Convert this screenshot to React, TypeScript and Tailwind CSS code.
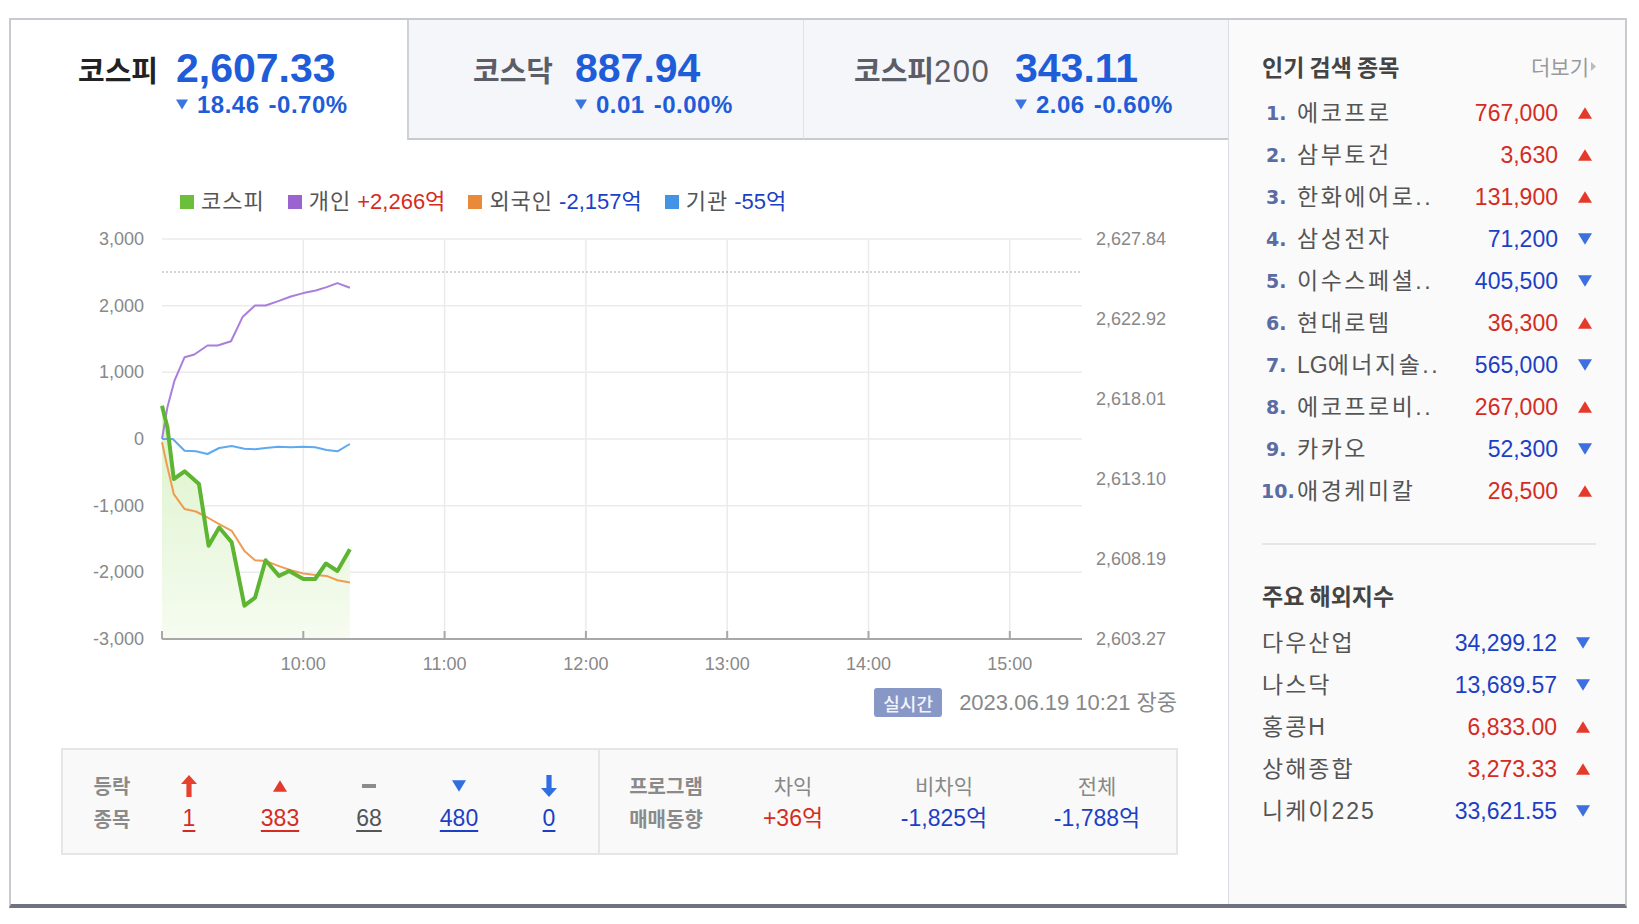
import React from "react";

const KO = "font-['Noto_Sans_CJK_KR','Liberation_Sans',sans-serif]";
const LAT = "font-['Liberation_Sans','Noto_Sans_CJK_KR',sans-serif]";
const RED = "text-[#d42c23]";
const BLUE = "text-[#1c3fc6]";

const TriDown = ({ c = "#3f74e0", w = 12, h = 10 }: { c?: string; w?: number; h?: number }) => (
  <svg width={w} height={h} viewBox="0 0 12 10" className="block shrink-0">
    <path d="M0 0H12L6 10Z" fill={c} />
  </svg>
);
const TriUp = ({ c = "#e53a2b", w = 13, h = 11 }: { c?: string; w?: number; h?: number }) => (
  <svg width={w} height={h} viewBox="0 0 12 10" className="block shrink-0">
    <path d="M6 0L12 10H0Z" fill={c} />
  </svg>
);

const X = (m: number) => 162 + m * 2.355;
const Y = (v: number) => 439 - v * 0.066667;
const toPath = (d: number[][]) =>
  d.map(([m, v], i) => `${i ? "L" : "M"}${X(m).toFixed(1)} ${Y(v).toFixed(1)}`).join(" ");

const green = [
  [0, 500], [2.3, 175], [5, -600], [9.6, -485], [15.7, -676], [19.8, -1600], [24.3, -1327],
  [29.6, -1550], [35, -2500], [39.5, -2380], [44, -1818], [49.7, -2053], [54, -1980],
  [60, -2100], [65, -2100], [69.6, -1868], [74.5, -1980], [79.8, -1653],
];
const purple = [
  [0, 0], [2.3, 475], [5.3, 876], [9.6, 1227], [13.7, 1267], [19.3, 1402], [23.6, 1402],
  [29.3, 1467], [34.2, 1828], [39.5, 2003], [44, 2003], [49.4, 2068], [54.7, 2138],
  [60, 2188], [65.3, 2228], [69.9, 2278], [74.5, 2338], [79.8, 2268],
];
const orange = [
  [0, -50], [2, -375], [5, -826], [9.6, -1051], [14.4, -1087], [19.3, -1177], [24.3, -1277],
  [29.6, -1377], [35, -1678], [39.5, -1818], [44, -1828], [49.4, -1903], [54.7, -1968],
  [60, -2018], [65.3, -2038], [69.9, -2053], [74.5, -2118], [79.8, -2153],
];
const blue = [
  [0, 0], [4.6, 0], [9.6, -175], [14.4, -185], [19.3, -225], [24.3, -135], [29.6, -105],
  [35, -145], [39.5, -155], [44, -135], [49.4, -115], [54.7, -125], [60, -115], [65, -125],
  [69.9, -165], [74.5, -185], [79.8, -75],
];

function Chart() {
  const hours = [10, 11, 12, 13, 14, 15];
  const leftLabels = ["3,000", "2,000", "1,000", "0", "-1,000", "-2,000", "-3,000"];
  const rightLabels = ["2,627.84", "2,622.92", "2,618.01", "2,613.10", "2,608.19", "2,603.27"];
  const gp = toPath(green);
  const fill = `${gp} L${X(79.8).toFixed(1)} 639 L162 639 Z`;
  const hx = (h: number) => 162 + (h - 9) * 141.3;
  const font = "'Liberation Sans', sans-serif";
  return (
    <svg width="1217" height="467" viewBox="11 213 1217 467" className="block">
      <defs>
        <linearGradient id="gf" x1="0" y1="380" x2="0" y2="639" gradientUnits="userSpaceOnUse">
          <stop offset="0" stopColor="#d9f1c5" />
          <stop offset="1" stopColor="#f6fcf1" />
        </linearGradient>
      </defs>
      {leftLabels.slice(0, 6).map((_, i) => (
        <line key={i} x1={162} x2={1082} y1={239 + i * 66.667} y2={239 + i * 66.667} stroke="#ebebeb" strokeWidth={1.5} />
      ))}
      {hours.map((h) => (
        <line key={h} x1={hx(h)} x2={hx(h)} y1={239} y2={639} stroke="#ebebeb" strokeWidth={1.5} />
      ))}
      <line x1={162} x2={1082} y1={272} y2={272} stroke="#a9a9a9" strokeWidth={1} strokeDasharray="2 2" />
      <path d={fill} fill="url(#gf)" />
      <line x1={162} x2={1082} y1={639} y2={639} stroke="#a8a8a8" strokeWidth={2} />
      {[162, ...hours.map(hx)].map((x, i) => (
        <line key={i} x1={x} x2={x} y1={631} y2={639} stroke="#a8a8a8" strokeWidth={2} />
      ))}
      <path d={toPath(purple)} fill="none" stroke="#a97fdd" strokeWidth={2} strokeLinejoin="round" />
      <path d={toPath(orange)} fill="none" stroke="#ef9c52" strokeWidth={2} strokeLinejoin="round" />
      <path d={toPath(blue)} fill="none" stroke="#5ea9f0" strokeWidth={2} strokeLinejoin="round" />
      <path d={gp} fill="none" stroke="#5db532" strokeWidth={4} strokeLinejoin="round" />
      {leftLabels.map((t, i) => (
        <text key={t} x={144} y={239 + i * 66.667} textAnchor="end" dominantBaseline="central" fontSize={18} fill="#888" fontFamily={font}>
          {t}
        </text>
      ))}
      {rightLabels.map((t, i) => (
        <text key={t} x={1096} y={239 + i * 80} dominantBaseline="central" fontSize={18} fill="#888" fontFamily={font}>
          {t}
        </text>
      ))}
      {hours.map((h) => (
        <text key={h} x={hx(h)} y={664} textAnchor="middle" dominantBaseline="central" fontSize={18} fill="#888" fontFamily={font}>
          {h}:00
        </text>
      ))}
    </svg>
  );
}

function IndexTab({
  label,
  labelW,
  value,
  diff,
  pct,
  className,
}: {
  label: React.ReactNode;
  labelW: string;
  value: string;
  diff: string;
  pct: string;
  className: string;
}) {
  return (
    <div className={className}>
      <div className="flex items-baseline gap-[16px]">
        <div className={`${labelW} whitespace-nowrap`}>{label}</div>
        <div className="flex flex-col">
          <div className={`${LAT} text-[41px] leading-[41px] font-bold text-[#1f5dd8] whitespace-nowrap`}>{value}</div>
          <div className={`${LAT} mt-[4px] h-[23px] flex items-center text-[24px] leading-none font-bold tracking-[0.5px] text-[#1f5dd8] whitespace-nowrap`}>
            <TriDown c="#3c74df" w={12} h={11} />
            <span className="ml-[9px]">{diff}</span>
            <span className="ml-[9px]">{pct}</span>
          </div>
        </div>
      </div>
    </div>
  );
}

function Legend() {
  const item = (color: string, label: string, val?: string, cls?: string) => (
    <div className="flex items-center">
      <span className="w-[14px] h-[14px]" style={{ background: color }} />
      <span className="ml-[7px] text-[#555] tracking-[1px]">{label}</span>
      {val && <span className={`ml-[6px] ${cls}`}>{val}</span>}
    </div>
  );
  return (
    <div className={`mt-[51px] h-[22px] pl-[169px] flex items-center gap-[23px] text-[22px] leading-none ${LAT}`}>
      {item("#6cbf3b", "코스피")}
      {item("#9b63cf", "개인", "+2,266억", RED)}
      {item("#e98a3a", "외국인", "-2,157억", BLUE)}
      {item("#4494e6", "기관", "-55억", BLUE)}
    </div>
  );
}

const ArrowUp = () => (
  <svg width="16" height="22" viewBox="0 0 16 22" className="block">
    <path d="M8 0L16 9H10.6V22H5.4V9H0Z" fill="#e4412f" />
  </svg>
);
const ArrowDown = () => (
  <svg width="16" height="22" viewBox="0 0 16 22" className="block">
    <path d="M8 22L16 13H10.6V0H5.4V13H0Z" fill="#2f6fe0" />
  </svg>
);

function Stats() {
  const cell = "h-[33px] flex items-center justify-center";
  const num = `${LAT} text-[23px] leading-none underline underline-offset-[4px] decoration-[1.5px]`;
  const col = (top: React.ReactNode, bottom: React.ReactNode) => (
    <div className="flex flex-col">
      <div className={cell}>{top}</div>
      <div className={cell}>{bottom}</div>
    </div>
  );
  const lbl = `${KO} text-[20px] leading-none font-bold text-[#8a8a8a]`;
  const head = `${KO} text-[21px] leading-none text-[#888]`;
  const val = `${LAT} text-[23px] leading-none`;
  return (
    <div className="mt-[31px] ml-[50px] w-[1117px] h-[107px] border-2 border-[#e6e6e6] bg-[#f9f9f9] flex">
      <div className="w-[537px] border-r-2 border-[#e6e6e6] pt-[19px] grid grid-cols-[98px_56px_126px_52px_128px_52px] content-start">
        {col(<span className={lbl}>등락</span>, <span className={lbl}>종목</span>)}
        {col(<ArrowUp />, <span className={`${num} ${RED}`}>1</span>)}
        {col(<TriUp w={14} h={12} />, <span className={`${num} ${RED}`}>383</span>)}
        {col(<span className="block w-[14px] h-[4px] bg-[#8c8c8c]" />, <span className={`${num} text-[#555]`}>68</span>)}
        {col(<TriDown c="#2f6fe0" w={14} h={12} />, <span className={`${num} ${BLUE}`}>480</span>)}
        {col(<ArrowDown />, <span className={`${num} ${BLUE}`}>0</span>)}
      </div>
      <div className="flex-1 pt-[19px] grid grid-cols-[132px_122px_180px_126px] content-start">
        {col(<span className={lbl}>프로그램</span>, <span className={lbl}>매매동향</span>)}
        {col(<span className={head}>차익</span>, <span className={`${val} ${RED}`}>+36억</span>)}
        {col(<span className={head}>비차익</span>, <span className={`${val} ${BLUE}`}>-1,825억</span>)}
        {col(<span className={head}>전체</span>, <span className={`${val} ${BLUE}`}>-1,788억</span>)}
      </div>
    </div>
  );
}

function LeftColumn() {
  return (
    <div className="w-[1217px] flex flex-col">
      <div className="flex h-[120px]">
        <IndexTab
          className="w-[396px] h-[120px] bg-white pl-[67px] pt-[28px]"
          label={<span className={`${KO} text-[29px] leading-none font-bold text-[#222]`}>코스피</span>}
          labelW="w-[82px]"
          value="2,607.33"
          diff="18.46"
          pct="-0.70%"
        />
        <IndexTab
          className="w-[396px] h-[120px] bg-[#f5f6f9] border-l-2 border-b-2 border-l-[#cfd1d6] border-b-[#c8cad0] pl-[64px] pt-[28px]"
          label={<span className={`${KO} text-[29px] leading-none font-bold text-[#5b5e66]`}>코스닥</span>}
          labelW="w-[86px]"
          value="887.94"
          diff="0.01"
          pct="-0.00%"
        />
        <IndexTab
          className="w-[425px] h-[120px] bg-[#f5f6f9] border-l border-b-2 border-l-[#dfe1e5] border-b-[#c8cad0] pl-[50px] pt-[28px]"
          label={
            <span className="leading-none text-[#5b5e66]">
              <span className={`${KO} text-[29px] font-bold`}>코스피</span>
              <span className={`${LAT} text-[31px] tracking-[1.5px]`}>200</span>
            </span>
          }
          labelW="w-[145px]"
          value="343.11"
          diff="2.06"
          pct="-0.60%"
        />
      </div>
      <Legend />
      <Chart />
      <div className="mt-[8px] h-[29px] pr-[51px] flex items-center justify-end">
        <span className={`${KO} w-[68px] h-[29px] rounded-[3px] bg-[#8797c6] text-[#f2f4fa] text-[18px] leading-none font-medium flex items-center justify-center`}>
          실시간
        </span>
        <span className={`${LAT} ml-[17px] text-[22px] leading-none text-[#888]`}>2023.06.19 10:21 장중</span>
      </div>
      <Stats />
    </div>
  );
}

const popular: [string, React.ReactNode, string, boolean][] = [
  ["1.", "에코프로", "767,000", true],
  ["2.", "삼부토건", "3,630", true],
  ["3.", "한화에어로..", "131,900", true],
  ["4.", "삼성전자", "71,200", false],
  ["5.", "이수스페셜..", "405,500", false],
  ["6.", "현대로템", "36,300", true],
  ["7.", <><span className="tracking-normal">LG</span>에너지솔..</>, "565,000", false],
  ["8.", "에코프로비..", "267,000", true],
  ["9.", "카카오", "52,300", false],
  ["10.", "애경케미칼", "26,500", true],
];

const world: [string, string, boolean][] = [
  ["다우산업", "34,299.12", false],
  ["나스닥", "13,689.57", false],
  ["홍콩H", "6,833.00", true],
  ["상해종합", "3,273.33", true],
  ["니케이225", "33,621.55", false],
];

function RightPanel() {
  return (
    <div className="w-[397px] border-l border-[#dcdde2] bg-[#fafafa] pl-[33px] pr-[29px] flex flex-col">
      <div className="mt-[31px] h-[30px] flex items-center justify-between">
        <span className={`${KO} text-[23px] leading-none font-bold text-[#444]`}>인기 검색 종목</span>
        <span className={`${KO} text-[21px] leading-none text-[#9a9a9a] flex items-center`}>
          더보기
          <svg width="5" height="9" viewBox="0 0 5 9" className="ml-[2px] block">
            <path d="M0 0L5 4.5L0 9Z" fill="#bbb" />
          </svg>
        </span>
      </div>
      <div className="mt-[11px] flex flex-col">
        {popular.map(([i, name, price, up]) => (
          <div key={i} className="h-[42px] pr-[4px] flex items-center">
            <span
              className={`${i === "10." ? "pl-0 -ml-[1px] w-[36px]" : "w-[35px] pl-[4px]"} font-['DejaVu_Sans',sans-serif] text-[19px] leading-none font-bold text-[#5b6ba3]`}
            >
              {i}
            </span>
            <span className={`${LAT} flex-1 text-[23px] leading-none tracking-[2.5px] text-[#555] whitespace-nowrap`}>{name}</span>
            <span className={`${LAT} text-[23px] leading-none ${up ? RED : BLUE}`}>{price}</span>
            <span className="ml-[20px] w-[14px] flex justify-center">
              {up ? <TriUp w={14} h={12} /> : <TriDown c="#3d6fe0" w={14} h={12} />}
            </span>
          </div>
        ))}
      </div>
      <div className="mt-[31px] h-[2px] bg-[#e4e5e8]" />
      <div className="mt-[35px] h-[30px] flex items-center">
        <span className={`${KO} text-[23px] leading-none font-bold text-[#444]`}>주요 해외지수</span>
      </div>
      <div className="mt-[12px] flex flex-col">
        {world.map(([name, v, up]) => (
          <div key={name} className="h-[42px] pr-[6px] flex items-center">
            <span className={`${LAT} flex-1 text-[23px] leading-none tracking-[2px] text-[#555]`}>{name}</span>
            <span className={`${LAT} text-[23px] leading-none ${up ? RED : BLUE}`}>{v}</span>
            <span className="ml-[19px] w-[14px] flex justify-center">
              {up ? <TriUp w={14} h={12} /> : <TriDown c="#3d6fe0" w={14} h={12} />}
            </span>
          </div>
        ))}
      </div>
    </div>
  );
}

export default function App() {
  return (
    <div className="w-[1639px] h-[924px] bg-white pt-[18px] pl-[9px]">
      <div className="w-[1618px] h-[890px] flex border-t-2 border-x-2 border-b-4 border-[#c8cacf] border-b-[#6e7282]">
        <LeftColumn />
        <RightPanel />
      </div>
    </div>
  );
}
